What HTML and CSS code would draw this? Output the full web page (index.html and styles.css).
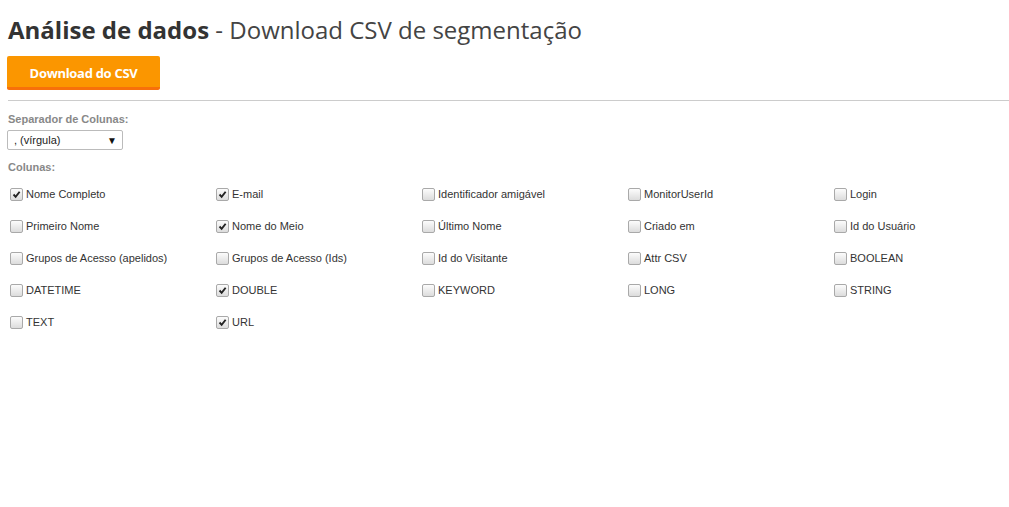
FILE: index.html
```html
<!DOCTYPE html>
<html lang="pt">
<head>
  <meta charset="UTF-8">
  <title>Análise de dados</title>
  <link rel="stylesheet" href="styles.css">
</head>
<body>
  <h1><b>Análise de dados</b> - Download CSV de segmentação</h1>
  <button class="btn-download">Download do CSV</button>
  <hr>

  <label class="field-label">Separador de Colunas:</label>
  <div class="select">
    <span>, (vírgula)</span>
    <span class="arrow">&#9660;</span>
  </div>

  <label class="field-label">Colunas:</label>
  <div class="columns">
    <label class="check"><span class="box on"><svg viewBox="0 0 13 13"><path d="M3 6.5 L5.5 9.2 L10.2 3.2" /></svg></span>Nome Completo</label>
    <label class="check"><span class="box on"><svg viewBox="0 0 13 13"><path d="M3 6.5 L5.5 9.2 L10.2 3.2" /></svg></span>E-mail</label>
    <label class="check"><span class="box"></span>Identificador amigável</label>
    <label class="check"><span class="box"></span>MonitorUserId</label>
    <label class="check"><span class="box"></span>Login</label>

    <label class="check"><span class="box"></span>Primeiro Nome</label>
    <label class="check"><span class="box on"><svg viewBox="0 0 13 13"><path d="M3 6.5 L5.5 9.2 L10.2 3.2" /></svg></span>Nome do Meio</label>
    <label class="check"><span class="box"></span>Último Nome</label>
    <label class="check"><span class="box"></span>Criado em</label>
    <label class="check"><span class="box"></span>Id do Usuário</label>

    <label class="check"><span class="box"></span>Grupos de Acesso (apelidos)</label>
    <label class="check"><span class="box"></span>Grupos de Acesso (Ids)</label>
    <label class="check"><span class="box"></span>Id do Visitante</label>
    <label class="check"><span class="box"></span>Attr CSV</label>
    <label class="check"><span class="box"></span>BOOLEAN</label>

    <label class="check"><span class="box"></span>DATETIME</label>
    <label class="check"><span class="box on"><svg viewBox="0 0 13 13"><path d="M3 6.5 L5.5 9.2 L10.2 3.2" /></svg></span>DOUBLE</label>
    <label class="check"><span class="box"></span>KEYWORD</label>
    <label class="check"><span class="box"></span>LONG</label>
    <label class="check"><span class="box"></span>STRING</label>

    <label class="check"><span class="box"></span>TEXT</label>
    <label class="check"><span class="box on"><svg viewBox="0 0 13 13"><path d="M3 6.5 L5.5 9.2 L10.2 3.2" /></svg></span>URL</label>
  </div>
</body>
</html>
```

FILE: styles.css
```css
* {
  margin: 0;
  padding: 0;
  box-sizing: border-box;
}
body {
  background: #fff;
  color: #333;
  font-family: 'Liberation Sans', Arial, sans-serif;
  font-size: 11px;
  padding: 14px 0 0 8px;
}
h1 {
  font-family: 'Open Sans', sans-serif;
  font-weight: 400;
  font-size: 24px;
  line-height: 32px;
  color: #444;
}
h1 b {
  font-weight: 700;
  color: #333;
}
.btn-download {
  display: block;
  margin: 10px 0 0 -1px;
  width: 153px;
  height: 34px;
  background: #fb9600;
  color: #fff;
  border: none;
  border-bottom: 3px solid #f7700a;
  border-radius: 2px;
  font-family: 'Open Sans', sans-serif;
  font-weight: 700;
  font-size: 13px;
  letter-spacing: -0.3px;
  padding-top: 2px;
}
hr {
  border: none;
  border-top: 1px solid #ccc;
  margin-top: 10px;
}
.field-label {
  display: block;
  font-weight: 700;
  color: #888;
  margin-top: 11px;
  line-height: 14px;
}
.select {
  display: flex;
  justify-content: space-between;
  align-items: center;
  width: 116px;
  height: 20px;
  margin: 4px 0 0 -1px;
  padding: 0 5px 0 6px;
  border: 1px solid #bbb;
  border-radius: 2px;
  color: #222;
}
.select .arrow {
  font-size: 10px;
  color: #111;
}
.select + .field-label {
  margin-top: 10px;
}
.columns {
  display: grid;
  grid-template-columns: repeat(5, 206px);
  grid-auto-rows: 32px;
  margin-top: 12px;
}
.check {
  display: flex;
  align-items: center;
  height: 16px;
  margin-left: 2px;
  color: #333;
}
.box {
  width: 13px;
  height: 13px;
  margin-right: 3px;
  border: 1px solid #a9a9a9;
  border-radius: 2px;
  background: linear-gradient(#fcfcfc, #dcdcdc);
}
.box svg {
  display: block;
  width: 11px;
  height: 11px;
}
.box svg path {
  fill: none;
  stroke: #222;
  stroke-width: 2.2;
}
```
